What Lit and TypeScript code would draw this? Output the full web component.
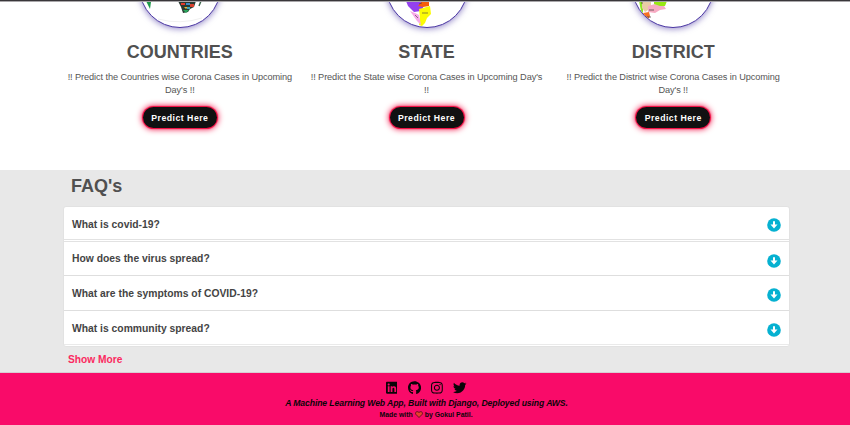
import { LitElement, html, css, svg } from "lit";
import { customElement, property } from "lit/decorators.js";

const MAPS: Record<string, unknown> = {
  countries: svg`
    <path d="M6 0L10 8L11 1Z" fill="#1d9a4b"/>
    <path d="M38 0H56L54 6L50 8L48 11L43 12L41 6Z" fill="#283a32"/>
    <path d="M41 2H45V4H41Z" fill="#e33a2c"/><path d="M46 2H50V4H46Z" fill="#3c8cc8"/>
    <path d="M50 3H54V6H50Z" fill="#d8412f"/><path d="M44 6H48L46 8Z" fill="#e8b92c"/>
    <path d="M43 9H49L46 12Z" fill="#2ba55b"/><path d="M47 6H50V8H47Z" fill="#38a7bd"/>
    <path d="M59 5L61 0" stroke="#39634a" stroke-width="1.4"/>
    <path d="M18 18Q40 24 62 17" stroke="#f0f0f0" fill="none"/>`,
  state: svg`
    <path d="M19 0H40L37 5L34 10L27 11L21 5Z" fill="#9440ee"/>
    <path d="M35 0H42V5L36 6L31 5Z" fill="#f65e0a"/>
    <path d="M32 8L36 7L43 5L44 13L40 17L38 22L35 25L32 24L33 17Z" fill="#fbfb05"/>
    <path d="M23 10L28 12L32 14L34 24L30 20Z" fill="#f7a9e7"/>
    <path d="M35 12H41M28 14L31 17M32 3L35 2" stroke="#403b46" stroke-width=".6"/>`,
  district: svg`
    <path d="M6 0H12L10 6L10 14L8 10Z" fill="#8be820"/>
    <path d="M9 0H18V7L12 11L9 7Z" fill="#e9cca5"/>
    <path d="M15 5L22 3L31 5L33 8L27 9L22 12L15 11Z" fill="#f7abc3"/>
    <path d="M21 0H34L32 5L27 5L21 3Z" fill="#98e913"/>
    <path d="M10 12L16 11L17 15L15 19L9 15Z" fill="#f67022"/>
    <path d="M11 16H18M16 9H21M8 2H10" stroke="#3b3b35" stroke-width=".7"/>`,
};

@customElement("predict-card")
class PredictCard extends LitElement {
  @property() name = "";
  @property() map = "";
  static styles = css`
    :host { display: flex; flex-direction: column; align-items: center; }
    .disc { box-sizing: border-box; width: 82px; height: 82px; margin-top: -55.6px; border-radius: 50%; border: 1px solid #4a36a3; background: #fff; box-shadow: 0 1px 6px #4a36a399; overflow: hidden; display: flex; align-items: flex-end; justify-content: center; }
    .map { width: 80px; height: 26px; flex: none; }
    h2 { margin: 12.6px 0 0; font-size: 18px; line-height: 22px; color: #505050; }
    p { margin: 8px 0 0; width: 234px; text-align: center; font-size: 9.2px; letter-spacing: -.09px; line-height: 13.4px; color: #555; }
    .btn { margin-top: 9.6px; width: 74px; height: 21px; border-radius: 11px; background: #111; color: #fff; display: flex; align-items: center; justify-content: center; font-size: 8.7px; font-weight: 700; letter-spacing: .5px; box-shadow: 0 0 1px 1px #f0083f, 0 0 6px 1px #f0083f; }
  `;
  render() {
    return html`<div class="disc"><svg class="map" viewBox="0 0 80 26">${MAPS[this.map]}</svg></div>
      <h2>${this.name.toUpperCase()}</h2>
      <p>!! Predict the ${this.name} wise Corona Cases in Upcoming Day's !!</p>
      <div class="btn">Predict Here</div>`;
  }
}

const SOCIAL = [
  { w: 448, d: "M416 32H31.9C14.3 32 0 46.5 0 64.3v383.4C0 465.5 14.3 480 31.9 480H416c17.6 0 32-14.5 32-32.3V64.3c0-17.8-14.4-32.3-32-32.3zM135.4 416H69V202.2h66.5V416zm-33.2-243c-21.3 0-38.5-17.3-38.5-38.5S80.9 96 102.2 96c21.2 0 38.5 17.3 38.5 38.5 0 21.3-17.2 38.5-38.5 38.5zm282.1 243h-66.4V312c0-24.8-.5-56.7-34.5-56.7-34.6 0-39.9 27-39.9 54.9V416h-66.4V202.2h63.7v29.2h.9c8.9-16.8 30.6-34.5 62.9-34.5 67.2 0 79.7 44.3 79.7 101.9V416z" },
  { w: 496, d: "M165.9 397.4c0 2-2.3 3.6-5.2 3.6-3.3.3-5.6-1.3-5.6-3.6 0-2 2.3-3.6 5.2-3.6 3-.3 5.6 1.3 5.6 3.6zM244.8 8C106.1 8 0 113.3 0 252c0 110.9 69.8 205.8 169.5 239.2 12.8 2.3 17.3-5.6 17.3-12.1 0-6.2-.3-40.4-.3-61.4 0 0-70 15-84.7-29.8 0 0-11.4-29.1-27.8-36.6 0 0-22.9-15.7 1.6-15.4 0 0 24.9 2 38.6 25.8 21.9 38.6 58.6 27.5 72.9 20.9 2.3-16 8.8-27.1 16-33.7-55.9-6.2-112.3-14.3-112.3-110.5 0-27.5 7.6-41.3 23.6-58.9-2.6-6.5-11.1-33.3 2.6-67.9 20.9-6.5 69 27 69 27 20-5.6 41.5-8.5 62.8-8.5s42.8 2.9 62.8 8.5c0 0 48.1-33.6 69-27 13.7 34.7 5.2 61.4 2.6 67.9 16 17.7 25.8 31.5 25.8 58.9 0 96.5-58.9 104.2-114.8 110.5 9.2 7.9 17 22.9 17 46.4 0 33.7-.3 75.4-.3 83.6 0 6.5 4.6 14.4 17.3 12.1C428.2 457.8 496 362.9 496 252 496 113.3 383.5 8 244.8 8z" },
  { w: 448, d: "M224.1 141c-63.6 0-114.9 51.3-114.9 114.9s51.3 114.9 114.9 114.9S339 319.5 339 255.9 287.7 141 224.1 141zm0 189.6c-41.1 0-74.7-33.5-74.7-74.7s33.5-74.7 74.7-74.7 74.7 33.5 74.7 74.7-33.6 74.7-74.7 74.7zm146.4-194.3c0 14.9-12 26.8-26.8 26.8-14.9 0-26.8-12-26.8-26.8s12-26.8 26.8-26.8 26.8 12 26.8 26.8zm76.1 27.2c-1.7-35.9-9.9-67.7-36.2-93.9-26.2-26.2-58-34.4-93.9-36.2-37-2.1-147.9-2.1-184.9 0-35.8 1.7-67.6 9.9-93.9 36.1s-34.4 58-36.2 93.9c-2.1 37-2.1 147.9 0 184.9 1.7 35.9 9.9 67.7 36.2 93.9s58 34.4 93.9 36.2c37 2.1 147.9 2.1 184.9 0 35.9-1.7 67.7-9.9 93.9-36.2 26.2-26.2 34.4-58 36.2-93.9 2.1-37 2.1-147.8 0-184.8zM398.8 388c-7.8 19.6-22.9 34.7-42.6 42.6-29.5 11.7-99.5 9-132.1 9s-102.7 2.6-132.1-9c-19.6-7.8-34.7-22.9-42.6-42.6-11.7-29.5-9-99.5-9-132.1s-2.6-102.7 9-132.1c7.8-19.6 22.9-34.7 42.6-42.6 29.5-11.7 99.5-9 132.1-9s102.7-2.6 132.1 9c19.6 7.8 34.7 22.9 42.6 42.6 11.7 29.5 9 99.5 9 132.1s2.7 102.7-9 132.1z" },
  { w: 512, d: "M459.37 151.716c.325 4.548.325 9.097.325 13.645 0 138.72-105.583 298.558-298.558 298.558-59.452 0-114.68-17.219-161.137-47.106 8.447.974 16.568 1.299 25.34 1.299 49.055 0 94.213-16.568 130.274-44.832-46.132-.975-84.792-31.188-98.112-72.772 6.498.974 12.995 1.624 19.818 1.624 9.421 0 18.843-1.3 27.614-3.573-48.081-9.747-84.143-51.98-84.143-102.985v-1.299c13.969 7.797 30.214 12.67 47.431 13.319-28.264-18.843-46.781-51.005-46.781-87.391 0-19.492 5.197-37.36 14.294-52.954 51.655 63.675 129.3 105.258 216.365 109.807-1.624-7.797-2.599-15.918-2.599-24.04 0-57.828 46.782-104.934 104.934-104.934 30.213 0 57.502 12.67 76.67 33.137 23.715-4.548 46.456-13.32 66.599-25.34-7.798 24.366-24.366 44.833-46.132 57.827 21.117-2.273 41.584-8.122 60.426-16.243-14.292 20.791-32.161 39.308-52.628 54.253z" },
];

const QUESTIONS = ["What is covid-19?", "How does the virus spread?", "What are the symptoms of COVID-19?", "What is community spread?"];

@customElement("app-root")
class AppRoot extends LitElement {
  static styles = css`
    :host { display: flex; flex-direction: column; height: 425px; overflow: hidden; background: #fff; font-family: "Liberation Sans", Arial, sans-serif; }
    .bar { height: 1px; background: #39373a; border-bottom: 1px solid #a9a7aa; flex: none; position: relative; z-index: 1; }
    .cards { height: 167.5px; flex: none; display: grid; grid-template-columns: repeat(3, 246.7px); padding-left: 56.5px; align-items: start; }
    .faq { height: 203.9px; flex: none; background: #e8e8e8; border-bottom: 1px solid #d8cdd2; box-sizing: border-box; padding: 5.5px 60px 0 63px; }
    h1 { margin: 0 0 9px 8px; font-size: 18px; line-height: 22px; color: #505050; }
    .list { box-sizing: border-box; width: 727px; height: 141px; background: #fff; border: 1px solid #e2e2e2; border-radius: 3px; }
    .row { box-sizing: border-box; height: 35px; display: flex; align-items: center; justify-content: space-between; padding: 0 8px; border-bottom: 1px solid #dedede; font-size: 10.33px; font-weight: 700; color: #444; }
    .row span { margin-top: 1px; }
    .row.split { border-bottom: 3px double #e2e2e2; }
    .row.split span { margin-top: 2px; }
    .row:nth-child(2) { height: 34px; }
    .row:nth-child(2) span { margin-top: 0; }
    .row:last-child { height: 34px; border-bottom: 1px solid #eaeaea; }
    .row:last-child span { margin-top: 2px; }
    .arrow { width: 14px; height: 14px; margin-top: 4px; }
    .row:last-child .arrow { margin-top: 5px; }
    .more { margin: 6px 0 0 5px; font-size: 10.2px; line-height: 14px; font-weight: 700; color: #fb2a5f; }
    footer { flex: 1; background: #f90b69; display: flex; flex-direction: column; align-items: center; color: #0b0508; font-weight: 700; }
    .social { display: flex; gap: 10.3px; margin: 8.2px 0 0 2.4px; height: 13px; align-items: center; }
    .social svg { height: 13.5px; }
    .tag { font-size: 8.65px; letter-spacing: -.1px; font-style: italic; line-height: 12px; margin: 2.4px 0 0 3px; }
    .by { font-size: 6.9px; line-height: 9px; margin: 1px 0 0 2px; display: flex; align-items: center; gap: 2px; }
    .heart { width: 8px; height: 7px; }
  `;
  render() {
    return html`
      <div class="bar"></div>
      <section class="cards">
        <predict-card name="Countries" map="countries"></predict-card>
        <predict-card name="State" map="state"></predict-card>
        <predict-card name="District" map="district"></predict-card>
      </section>
      <section class="faq">
        <h1>FAQ's</h1>
        <div class="list">
          ${QUESTIONS.map((q, i) => html`<div class="row ${i === 0 ? "split" : ""}"><span>${q}</span>
            <svg class="arrow" viewBox="0 0 14 14"><circle cx="7" cy="7" r="6.8" fill="#06b1d1"/><path d="M6 3.2H8V6.6H10.5L7 10.6L3.5 6.6H6Z" fill="#fff"/></svg></div>`)}
        </div>
        <div class="more">Show More</div>
      </section>
      <footer>
        <div class="social">${SOCIAL.map((s) => html`<svg viewBox="0 0 ${s.w} 512"><path fill="#0b0508" d=${s.d}/></svg>`)}</div>
        <div class="tag">A Machine Learning Web App, Built with Django, Deployed using AWS.</div>
        <div class="by"><span>Made with</span>
          <svg class="heart" viewBox="0 0 16 14"><path d="M8 13L2 7C-1 3 4-1 8 3C12-1 17 3 14 7Z" fill="#e8412c" stroke="#30100c" stroke-width="1.4"/></svg>
          <span>by Gokul Patil.</span></div>
      </footer>`;
  }
}
